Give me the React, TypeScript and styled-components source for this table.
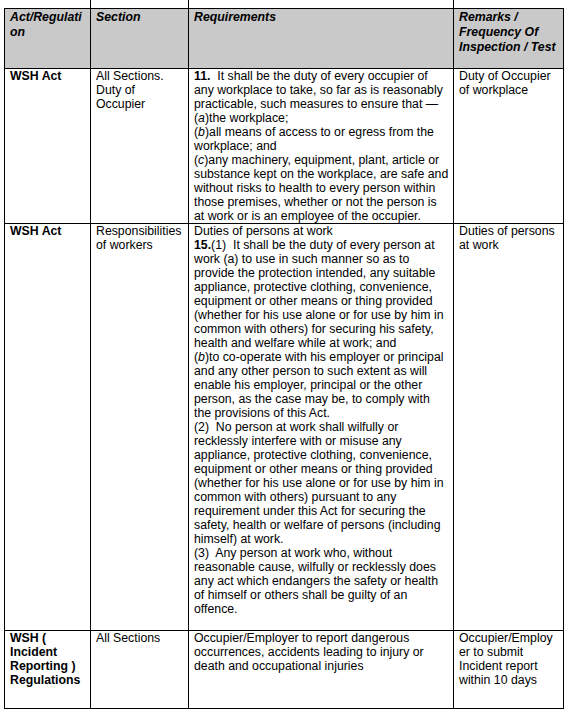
import React from "react";
import styled, { createGlobalStyle } from "styled-components";

const GlobalStyle = createGlobalStyle`
  html, body {
    margin: 0;
    padding: 0;
    background: #ffffff;
  }
  body {
    font-family: "Liberation Sans", Arial, sans-serif;
    color: #000000;
  }
`;

type Row = {
  act: React.ReactNode[];
  section: React.ReactNode[];
  requirements: React.ReactNode[];
  remarks: React.ReactNode[];
  tail: number;
};

const rows: Row[] = [
  {
    act: ["WSH Act"],
    section: ["All Sections.", "Duty of", "Occupier"],
    requirements: [
      <>
        <b>11.</b>&nbsp; It shall be the duty of every occupier of
      </>,
      "any workplace to take, so far as is reasonably",
      "practicable, such measures to ensure that —",
      <>
        (<i>a</i>)the workplace;
      </>,
      <>
        (<i>b</i>)all means of access to or egress from the
      </>,
      "workplace; and",
      <>
        (<i>c</i>)any machinery, equipment, plant, article or
      </>,
      "substance kept on the workplace, are safe and",
      "without risks to health to every person within",
      "those premises, whether or not the person is",
      "at work or is an employee of the occupier.",
    ],
    remarks: ["Duty of Occupier", "of workplace"],
    tail: 0,
  },
  {
    act: ["WSH Act"],
    section: ["Responsibilities", "of workers"],
    requirements: [
      "Duties of persons at work",
      <>
        <b>15.</b>(1)&nbsp; It shall be the duty of every person at
      </>,
      "work (a) to use in such manner so as to",
      "provide the protection intended, any suitable",
      "appliance, protective clothing, convenience,",
      "equipment or other means or thing provided",
      "(whether for his use alone or for use by him in",
      "common with others) for securing his safety,",
      "health and welfare while at work; and",
      <>
        (<i>b</i>)to co-operate with his employer or principal
      </>,
      "and any other person to such extent as will",
      "enable his employer, principal or the other",
      "person, as the case may be, to comply with",
      "the provisions of this Act.",
      <>(2)&nbsp; No person at work shall wilfully or</>,
      "recklessly interfere with or misuse any",
      "appliance, protective clothing, convenience,",
      "equipment or other means or thing provided",
      "(whether for his use alone or for use by him in",
      "common with others) pursuant to any",
      "requirement under this Act for securing the",
      "safety, health or welfare of persons (including",
      "himself) at work.",
      <>(3)&nbsp; Any person at work who, without</>,
      "reasonable cause, wilfully or recklessly does",
      "any act which endangers the safety or health",
      "of himself or others shall be guilty of an",
      "offence.",
    ],
    remarks: ["Duties of persons", "at work"],
    tail: 14,
  },
  {
    act: ["WSH (", "Incident", "Reporting )", "Regulations"],
    section: ["All Sections"],
    requirements: [
      "Occupier/Employer to report dangerous",
      "occurrences, accidents leading to injury or",
      "death and occupational injuries",
    ],
    remarks: ["Occupier/Employ", "er to submit", "Incident report", "within 10 days"],
    tail: 21,
  },
];

const headings = ["Act/Regulati|on", "Section", "Requirements", "Remarks /|Frequency Of|Inspection / Test"];

const COLUMNS = "86px 98px 265px 110px";

export default function App() {
  return (
    <>
      <GlobalStyle />
      <Page>
        <Stub>
          <StubCell divider />
          <StubCell divider />
          <StubCell divider />
          <StubCell />
        </Stub>
        <Table>
          {headings.map((h) => (
            <HeadCell key={h}>
              {h.split("|").map((line) => (
                <Line key={line}>{line}</Line>
              ))}
            </HeadCell>
          ))}
          {rows.map((row, i) => (
            <React.Fragment key={i}>
              <Cell tail={row.tail} bold>
                {row.act.map((line, j) => (
                  <Line key={j}>{line}</Line>
                ))}
              </Cell>
              <Cell tail={row.tail}>
                {row.section.map((line, j) => (
                  <Line key={j}>{line}</Line>
                ))}
              </Cell>
              <Cell tail={row.tail}>
                {row.requirements.map((line, j) => (
                  <Line key={j}>{line}</Line>
                ))}
              </Cell>
              <Cell tail={row.tail}>
                {row.remarks.map((line, j) => (
                  <Line key={j}>{line}</Line>
                ))}
              </Cell>
            </React.Fragment>
          ))}
        </Table>
      </Page>
    </>
  );
}

const Page = styled.div`
  width: 570px;
  padding-left: 4px;
  box-sizing: border-box;
`;

const Stub = styled.div`
  display: grid;
  grid-template-columns: ${COLUMNS};
  height: 8px;
  margin-left: 1px;
`;

const StubCell = styled.div<{ divider?: boolean }>`
  border-right: ${(p) => (p.divider ? "1px solid #000" : "none")};
`;

const Table = styled.div`
  display: grid;
  grid-template-columns: ${COLUMNS};
  width: max-content;
  border-top: 1px solid #000;
  border-left: 1px solid #000;
`;

const Cell = styled.div<{ tail: number; bold?: boolean }>`
  box-sizing: border-box;
  border-right: 1px solid #000;
  border-bottom: 1px solid #000;
  padding: 0 5px ${(p) => p.tail}px;
  font-size: 12.3px;
  line-height: 14px;
  font-weight: ${(p) => (p.bold ? 700 : 400)};
  overflow: hidden;
`;

const HeadCell = styled.div`
  box-sizing: border-box;
  border-right: 1px solid #000;
  border-bottom: 1px solid #000;
  background: #c9c9c9;
  padding: 1px 5px 13px;
  font-size: 12.3px;
  line-height: 15px;
  font-weight: 700;
  font-style: italic;
`;

const Line = styled.div`
  white-space: nowrap;
`;
